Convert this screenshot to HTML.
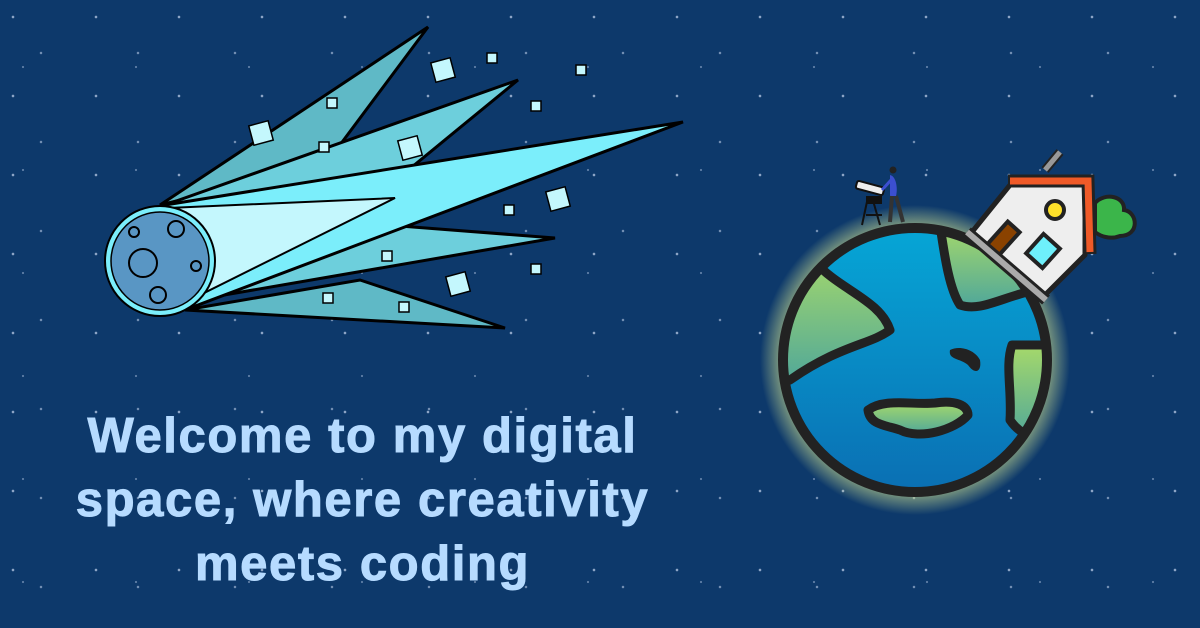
<!DOCTYPE html>
<html><head><meta charset="utf-8"><style>
html,body{margin:0;padding:0}
body{width:1200px;height:628px;overflow:hidden;position:relative;background:#0d396b;
background-image:
radial-gradient(circle at 13px 17px,rgba(200,215,240,.7) 1px,transparent 1.6px),
radial-gradient(circle at 41px 53px,rgba(200,215,240,.55) 1px,transparent 1.5px),
radial-gradient(circle at 71px 29px,rgba(200,215,240,.5) .8px,transparent 1.3px),
radial-gradient(circle at 23px 67px,rgba(200,215,240,.45) .8px,transparent 1.3px);
background-size:83px 79px,97px 89px,61px 71px,113px 103px;}
.t{position:absolute;left:0;width:725px;top:404px;text-align:center;font-family:"Liberation Sans",sans-serif;font-weight:bold;font-size:49px;line-height:64px;color:#b6dbff;letter-spacing:1.6px;-webkit-text-stroke:1px #b6dbff}
svg{position:absolute;left:0;top:0}
</style></head><body>
<svg width="1200" height="628" viewBox="0 0 1200 628">
<defs>
<radialGradient id="glow" cx="915" cy="360" r="155" gradientUnits="userSpaceOnUse">
<stop offset="0.82" stop-color="#d8e890" stop-opacity="0.75"/><stop offset="1" stop-color="#d8e890" stop-opacity="0"/></radialGradient>
<linearGradient id="sea" x1="0" y1="0" x2="0" y2="1"><stop offset="0" stop-color="#06a6d6"/><stop offset="1" stop-color="#0a6fb3"/></linearGradient>
<linearGradient id="land" x1="0" y1="0" x2="0" y2="1"><stop offset="0" stop-color="#a6d96a"/><stop offset="1" stop-color="#4fa79a"/></linearGradient>
<clipPath id="ec"><circle cx="915" cy="360" r="132"/></clipPath>
</defs>
<g stroke="#000" stroke-width="3" stroke-linejoin="miter">
<polygon points="160,205 428,27 325,165" fill="#5fb9c6"/>
<polygon points="185,310 505,328 360,280" fill="#5fb9c6"/>
<polygon points="165,205 518,80 390,185" fill="#6dcfdc"/>
<polygon points="195,300 555,238 400,226" fill="#6dcfdc"/>
<polygon points="165,205 683,122 190,308" fill="#7beefb"/>
<polygon points="168,208 395,198 190,300" fill="#c4f7fd" stroke-width="2"/>
</g>
<circle cx="160" cy="261" r="55" fill="#7beefb" stroke="#000" stroke-width="2"/>
<circle cx="160" cy="261" r="49" fill="#5996c4" stroke="#000" stroke-width="1.5"/>
<g fill="none" stroke="#000" stroke-width="2">
<circle cx="143" cy="263" r="14"/><circle cx="176" cy="229" r="8"/><circle cx="134" cy="232" r="5"/><circle cx="196" cy="266" r="5"/><circle cx="158" cy="295" r="8"/></g>
<g fill="#c4f7fd" stroke="#000" stroke-width="1.5">
<rect x="251" y="123" width="20" height="20" transform="rotate(-15 261 133)"/>
<rect x="433" y="60" width="20" height="20" transform="rotate(-15 443 70)"/>
<rect x="400" y="138" width="20" height="20" transform="rotate(-15 410 148)"/>
<rect x="548" y="189" width="20" height="20" transform="rotate(-15 558 199)"/>
<rect x="448" y="274" width="20" height="20" transform="rotate(-15 458 284)"/>
<rect x="327" y="98" width="10" height="10"/><rect x="487" y="53" width="10" height="10"/>
<rect x="576" y="65" width="10" height="10"/><rect x="531" y="101" width="10" height="10"/>
<rect x="319" y="142" width="10" height="10"/><rect x="504" y="205" width="10" height="10"/>
<rect x="382" y="251" width="10" height="10"/><rect x="531" y="264" width="10" height="10"/>
<rect x="323" y="293" width="10" height="10"/><rect x="399" y="302" width="10" height="10"/>
</g>
<circle cx="915" cy="360" r="155" fill="url(#glow)"/>
<circle cx="915" cy="360" r="132" fill="url(#sea)"/>
<g clip-path="url(#ec)" fill="url(#land)" stroke="#222" stroke-width="9" stroke-linejoin="round">
<path d="M760,250 L815,262 C840,290 880,300 890,330 C870,345 840,345 790,380 L760,385Z"/>
<path d="M940,225 C945,260 950,290 960,305 C980,312 1000,298 1035,290 L1060,230Z"/>
<path d="M868,410 C885,398 910,405 935,403 C955,400 968,405 968,415 C955,430 920,440 900,430 C885,425 870,425 868,410Z"/>
<path d="M1060,345 L1012,345 C1005,365 1012,390 1010,420 C1018,432 1030,440 1060,440Z"/>
<path d="M1060,440 C1030,445 1000,455 985,480 L1060,500Z" fill="#222"/>
</g>
<path d="M950,350 C960,345 975,350 980,360 C982,372 975,375 968,365 C960,358 948,360 950,350Z" fill="#222"/>
<circle cx="915" cy="360" r="132" fill="none" stroke="#222" stroke-width="10"/>
<path d="M1045,170 L1060,152" stroke="#222" stroke-width="9"/><path d="M1045,170 L1060,152" stroke="#999" stroke-width="5"/>
<polygon points="1010,185 1085,185 1085,255 1045,295 972,232" fill="#eee" stroke="#222" stroke-width="5" stroke-linejoin="round"/>
<polyline points="1008,181 1088,181 1090,254" fill="none" stroke="#222" stroke-width="13"/>
<polyline points="1010,181 1088,181 1090,252" fill="none" stroke="#f05a28" stroke-width="7"/>
<rect x="993" y="222" width="16" height="38" fill="#8a4200" stroke="#222" stroke-width="4" transform="rotate(42 1001 241)"/>
<circle cx="1055" cy="210" r="9" fill="#fde02a" stroke="#222" stroke-width="4"/>
<rect x="1032" y="238" width="22" height="26" fill="#6ef0fb" stroke="#222" stroke-width="4" transform="rotate(42 1043 251)"/>
<path d="M967,232 L1046,300" stroke="#222" stroke-width="12"/><path d="M967,232 L1046,300" stroke="#aaa" stroke-width="6"/>
<path d="M1095,203 C1105,192 1125,196 1124,210 C1138,212 1140,236 1120,236 C1110,240 1100,236 1095,232Z" fill="#3bb54a" stroke="#222" stroke-width="4"/>
<g stroke="#111" stroke-width="2" fill="none">
<path d="M868,197 L862,225 M872,197 L880,225 M866,215 L882,215"/></g>
<rect x="856" y="184" width="28" height="8" rx="2" fill="#eee" stroke="#111" stroke-width="2" transform="rotate(15 870 188)"/>
<rect x="866" y="196" width="16" height="8" fill="#111"/>
<path d="M890,175 C896,176 898,188 896,196 L890,196Z" fill="#3c4fd0"/>
<path d="M892,196 L890,222 M896,196 L903,222" stroke="#333" stroke-width="4"/>
<circle cx="893" cy="170" r="3.5" fill="#222"/>
<path d="M891,180 L882,190" stroke="#3c4fd0" stroke-width="3"/>
</svg>
<div class="t">Welcome to my digital<br>space, where creativity<br>meets coding</div>
</body></html>
